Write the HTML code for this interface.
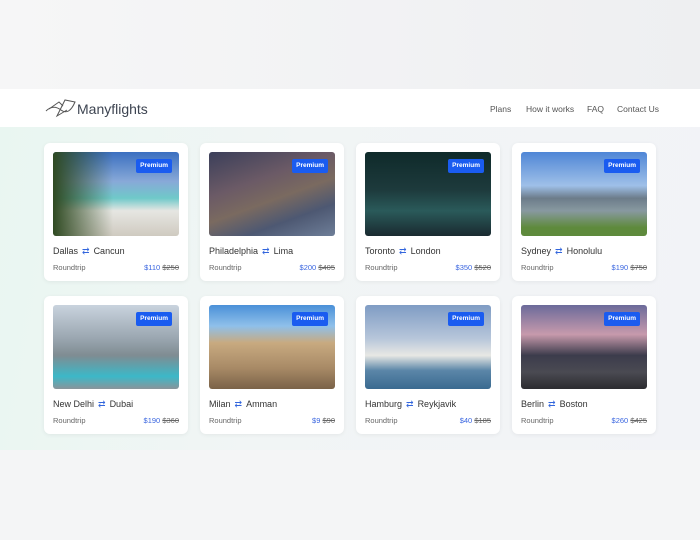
<!DOCTYPE html>
<html><head><style>
*{margin:0;padding:0;box-sizing:border-box}
body{width:700px;height:540px;background:#f4f5f6;font-family:"Liberation Sans",sans-serif;position:relative;overflow:hidden}
.top{position:absolute;left:0;top:0;width:700px;height:89px;background:linear-gradient(90deg,#f6f6f7,#eeeff1)}
.hdr{position:absolute;left:0;top:89px;width:700px;height:38px;background:#fff}
.logo{position:absolute;left:77px;top:101px;font-size:14px;color:#3d4451}
.nav{position:absolute;top:104px;font-size:8.5px;color:#555}
.main{position:absolute;left:0;top:127px;width:700px;height:323px;background:linear-gradient(100deg,#e9f6f1 0%,#f1f5f5 40%,#f2f3f7 100%)}
.card{position:absolute;width:144px;height:138px;background:#fff;border-radius:6px;box-shadow:0 1px 4px rgba(0,0,0,.06)}
.img{position:absolute;left:9px;top:9px;width:126px;height:84px;border-radius:3px;overflow:hidden}
.badge{position:absolute;right:7px;top:7px;background:#1a5cf0;color:#fff;font-size:6.5px;font-weight:bold;padding:3px 4px 4px;border-radius:2px}
.t{position:absolute;left:9px;top:103px;font-size:9px;color:#333}
.t b{color:#3366dd;font-weight:normal;margin:0 4px}
.r{position:absolute;left:9px;top:120px;font-size:7.5px;color:#666}
.p{position:absolute;right:9px;top:120px;font-size:7.5px;color:#3a66e0}
.p s{color:#666}
</style></head><body>
<div class="top"></div>
<div class="hdr"></div>
<svg style="position:absolute;left:45px;top:98px" width="32" height="20" viewBox="0 0 32 20" fill="none" stroke="#555" stroke-width="1"><path d="M1 13 Q8 6 16 12 Q24 18 30 4 L20 2 L12 18 L22 12"/><path d="M4 11 L14 4 L18 8"/></svg>
<div class="logo">Manyflights</div>
<div class="nav" style="left:490px">Plans</div>
<div class="nav" style="left:526px">How it works</div>
<div class="nav" style="left:587px">FAQ</div>
<div class="nav" style="left:617px">Contact Us</div>
<div class="main"></div>

<div class="card" style="left:44px;top:143px"><div class="img" style="background:linear-gradient(180deg,#3b6fc0 0%,#88a9d8 35%,#6fc9c9 55%,#e6e6e2 70%,#cfcac0 100%)"><div style="position:absolute;left:0;top:0;width:60px;height:84px;background:linear-gradient(90deg,#2f4a22,transparent)"></div><div class="badge">Premium</div></div><div class="t">Dallas<b>⇄</b>Cancun</div><div class="r">Roundtrip</div><div class="p">$110 <s>$250</s></div></div>

<div class="card" style="left:200px;top:143px"><div class="img" style="background:linear-gradient(160deg,#3b3f5a 0%,#6b5a66 35%,#7a6a60 55%,#4d5872 75%,#6e7e98 100%)"><div class="badge">Premium</div></div><div class="t">Philadelphia<b>⇄</b>Lima</div><div class="r">Roundtrip</div><div class="p">$200 <s>$405</s></div></div>

<div class="card" style="left:356px;top:143px"><div class="img" style="background:linear-gradient(180deg,#0f2a2a 0%,#1d3a3c 45%,#2a5a5a 70%,#1a2a30 100%)"><div class="badge">Premium</div></div><div class="t">Toronto<b>⇄</b>London</div><div class="r">Roundtrip</div><div class="p">$350 <s>$520</s></div></div>

<div class="card" style="left:512px;top:143px"><div class="img" style="background:linear-gradient(180deg,#4f86d6 0%,#9fc0e8 40%,#6c7c8a 55%,#8899a0 70%,#5e8a3c 90%)"><div class="badge">Premium</div></div><div class="t">Sydney<b>⇄</b>Honolulu</div><div class="r">Roundtrip</div><div class="p">$190 <s>$750</s></div></div>

<div class="card" style="left:44px;top:296px"><div class="img" style="background:linear-gradient(180deg,#c9d3de 0%,#9aa6b0 40%,#7f8c92 60%,#3cb8c8 85%,#8a949a 100%)"><div class="badge">Premium</div></div><div class="t">New Delhi<b>⇄</b>Dubai</div><div class="r">Roundtrip</div><div class="p">$190 <s>$360</s></div></div>

<div class="card" style="left:200px;top:296px"><div class="img" style="background:linear-gradient(180deg,#4a90d8 0%,#8fc0ea 25%,#c8aa80 45%,#a88a66 75%,#7a6248 100%)"><div class="badge">Premium</div></div><div class="t">Milan<b>⇄</b>Amman</div><div class="r">Roundtrip</div><div class="p">$9 <s>$90</s></div></div>

<div class="card" style="left:356px;top:296px"><div class="img" style="background:linear-gradient(180deg,#7f9cc4 0%,#b7c6da 40%,#e8e8e4 60%,#5b86a8 78%,#3a6a90 100%)"><div class="badge">Premium</div></div><div class="t">Hamburg<b>⇄</b>Reykjavik</div><div class="r">Roundtrip</div><div class="p">$40 <s>$185</s></div></div>

<div class="card" style="left:512px;top:296px"><div class="img" style="background:linear-gradient(180deg,#6b6a9a 0%,#c79aac 35%,#3c3c4c 60%,#4a4a52 80%,#2c2c30 100%)"><div class="badge">Premium</div></div><div class="t">Berlin<b>⇄</b>Boston</div><div class="r">Roundtrip</div><div class="p">$260 <s>$425</s></div></div>
</body></html>
